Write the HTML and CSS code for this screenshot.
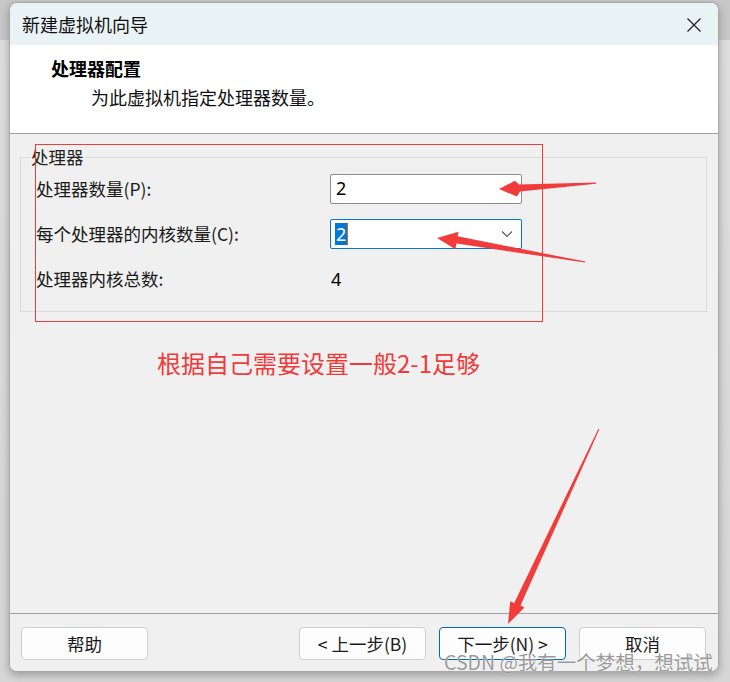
FILE: index.html
```html
<!DOCTYPE html>
<html lang="zh-CN">
<head>
<meta charset="utf-8">
<title>新建虚拟机向导</title>
<link rel="stylesheet" href="styles.css">
</head>
<body>
<div class="window">
  <div class="titlebar">
    <span class="title">新建虚拟机向导</span>
    <svg class="close" width="16" height="16" viewBox="0 0 16 16"><path d="M1.5 1.5 L14.5 14.5 M14.5 1.5 L1.5 14.5" stroke="#1e1e1e" stroke-width="1.2" fill="none"/></svg>
  </div>
  <div class="header">
    <div class="h-title">处理器配置</div>
    <div class="h-sub">为此虚拟机指定处理器数量。</div>
  </div>
  <div class="content">
    <fieldset class="group">
      <legend>处理器</legend>
      <div class="rows">
        <label class="lbl">处理器数量(P):</label>
        <div class="input">2</div>
        <label class="lbl">每个处理器的内核数量(C):</label>
        <div class="combo"><span class="sel">2</span><svg class="chev" width="12" height="8" viewBox="0 0 12 8"><path d="M1 1.5 L6 6.5 L11 1.5" stroke="#555" stroke-width="1.1" fill="none"/></svg></div>
        <label class="lbl">处理器内核总数:</label>
        <div class="value">4</div>
      </div>
    </fieldset>
    <p class="note">根据自己需要设置一般2-1足够</p>
  </div>
  <div class="footer">
    <button class="btn">帮助</button>
    <div class="spacer"></div>
    <button class="btn">&lt; 上一步(B)</button>
    <button class="btn primary">下一步(N) &gt;</button>
    <button class="btn">取消</button>
  </div>
</div>
<svg class="annot" width="730" height="682" viewBox="0 0 730 682">
  <rect x="35.5" y="144.5" width="507" height="177" fill="none" stroke="#ee3b3b" stroke-width="1"/>
  <polygon fill="#f23c3c" points="596,182.4 519,184.6 515,180.8 499,189 517,196.6 520,191.6 596,183.8"/>
  <polygon fill="#f23c3c" points="585.3,261.6 457.6,236.3 458.6,231.8 437,238 455.4,249.3 456.5,243.5 584.9,262.6"/>
  <polygon fill="#f23c3c" points="599.4,429.3 520.5,605.6 524.5,607.6 508,624 510.2,601.2 514.2,603 598.4,428.8"/>
</svg>
<div class="watermark">CSDN @我有一个梦想，想试试</div>
</body>
</html>
```

FILE: styles.css
```css
* { box-sizing: border-box; }
html, body { margin: 0; padding: 0; }
body {
  width: 730px;
  height: 682px;
  overflow: hidden;
  position: relative;
  background: linear-gradient(#c8c8c8 0, #c8c8c8 40px, #dedede 40px, #d6d6d6 100%);
  font-family: "Noto Sans CJK SC", "Noto Sans", sans-serif;
  color: #1a1a1a;
}
.window {
  margin: 2px 0 0 9px;
  width: 710px;
  height: 670px;
  border: 1px solid #a9a9a9;
  border-radius: 8px;
  overflow: hidden;
  display: flex;
  flex-direction: column;
  background: #f0f0f0;
  box-shadow: 0 3px 8px rgba(0,0,0,0.28);
}
.titlebar {
  height: 42px;
  flex: none;
  background: #e9f3f6;
  display: flex;
  align-items: center;
  justify-content: space-between;
  padding: 0 16px 0 12px;
}
.title {
  font-size: 18px;
  line-height: 24px;
  color: #111;
}
.close { display: block; margin-top: 1px; }
.header {
  height: 89px;
  flex: none;
  background: #ffffff;
  border-bottom: 1px solid #a0a0a0;
  padding: 11px 0 0 41px;
}
.h-title {
  font-size: 18px;
  line-height: 24px;
  font-weight: 700;
  color: #000;
}
.h-sub {
  font-size: 18px;
  line-height: 24px;
  margin: 5px 0 0 40px;
  color: #111;
}
.content {
  flex: 1;
  background: #f0f0f0;
  padding: 13px 11px 0 10px;
}
.group {
  margin: 0;
  border: 1px solid #dadada;
  padding: 7px 0 17px 0;
  min-width: 0;
}
.group legend {
  font-size: 17.5px;
  line-height: 20px;
  padding: 0 1px;
  margin-left: 9px;
  color: #222;
}
.rows {
  display: grid;
  grid-template-columns: 294px 192px;
  grid-auto-rows: 30px;
  row-gap: 15px;
  align-items: center;
  padding-left: 15px;
}
.lbl {
  font-size: 17.5px;
  line-height: 24px;
  color: #1a1a1a;
}
.input {
  height: 30px;
  background: #fff;
  border: 1px solid #8c8c8c;
  border-radius: 2px;
  padding-left: 5px;
  font-family: "Noto Sans", sans-serif;
  font-size: 18px;
  line-height: 27px;
  color: #000;
}
.combo {
  height: 30px;
  background: #fff;
  border: 1px solid #0078d7;
  border-radius: 2px;
  display: flex;
  align-items: center;
  justify-content: space-between;
  padding: 0 8px 0 4px;
}
.sel {
  background: #0078d7;
  color: #fff;
  font-family: "Noto Sans", sans-serif;
  font-size: 18px;
  line-height: 22px;
  padding: 0 1px;
  border-right: 1px solid #d06a10;
}
.chev { display: block; }
.value {
  font-family: "Noto Sans", sans-serif;
  font-size: 18px;
  line-height: 24px;
  padding-left: 1px;
  color: #000;
}
.note {
  margin: 35px 0 0 137px;
  font-size: 24px;
  line-height: 32px;
  color: #f03a3a;
}
.footer {
  height: 58px;
  flex: none;
  border-top: 1px solid #a0a0a0;
  background: #f0f0f0;
  display: flex;
  align-items: flex-start;
  gap: 13px;
  padding: 13px 12px 0 11px;
}
.spacer { flex: 1; }
.btn {
  width: 127px;
  height: 33px;
  background: #fdfdfd;
  border: 1px solid #cfcfcf;
  border-radius: 4px;
  font-family: "Noto Sans CJK SC", "Noto Sans", sans-serif;
  font-size: 17.5px;
  line-height: 22px;
  color: #1a1a1a;
  padding: 0;
}
.btn.primary {
  border-color: #0067c0;
}
.annot {
  position: absolute;
  left: 0;
  top: 0;
  pointer-events: none;
}
.watermark {
  position: absolute;
  left: 444px;
  top: 649px;
  font-size: 19.5px;
  line-height: 26px;
  color: rgba(120,120,120,0.75);
  text-shadow: 0 0 1px #fff;
  white-space: nowrap;
}
```
